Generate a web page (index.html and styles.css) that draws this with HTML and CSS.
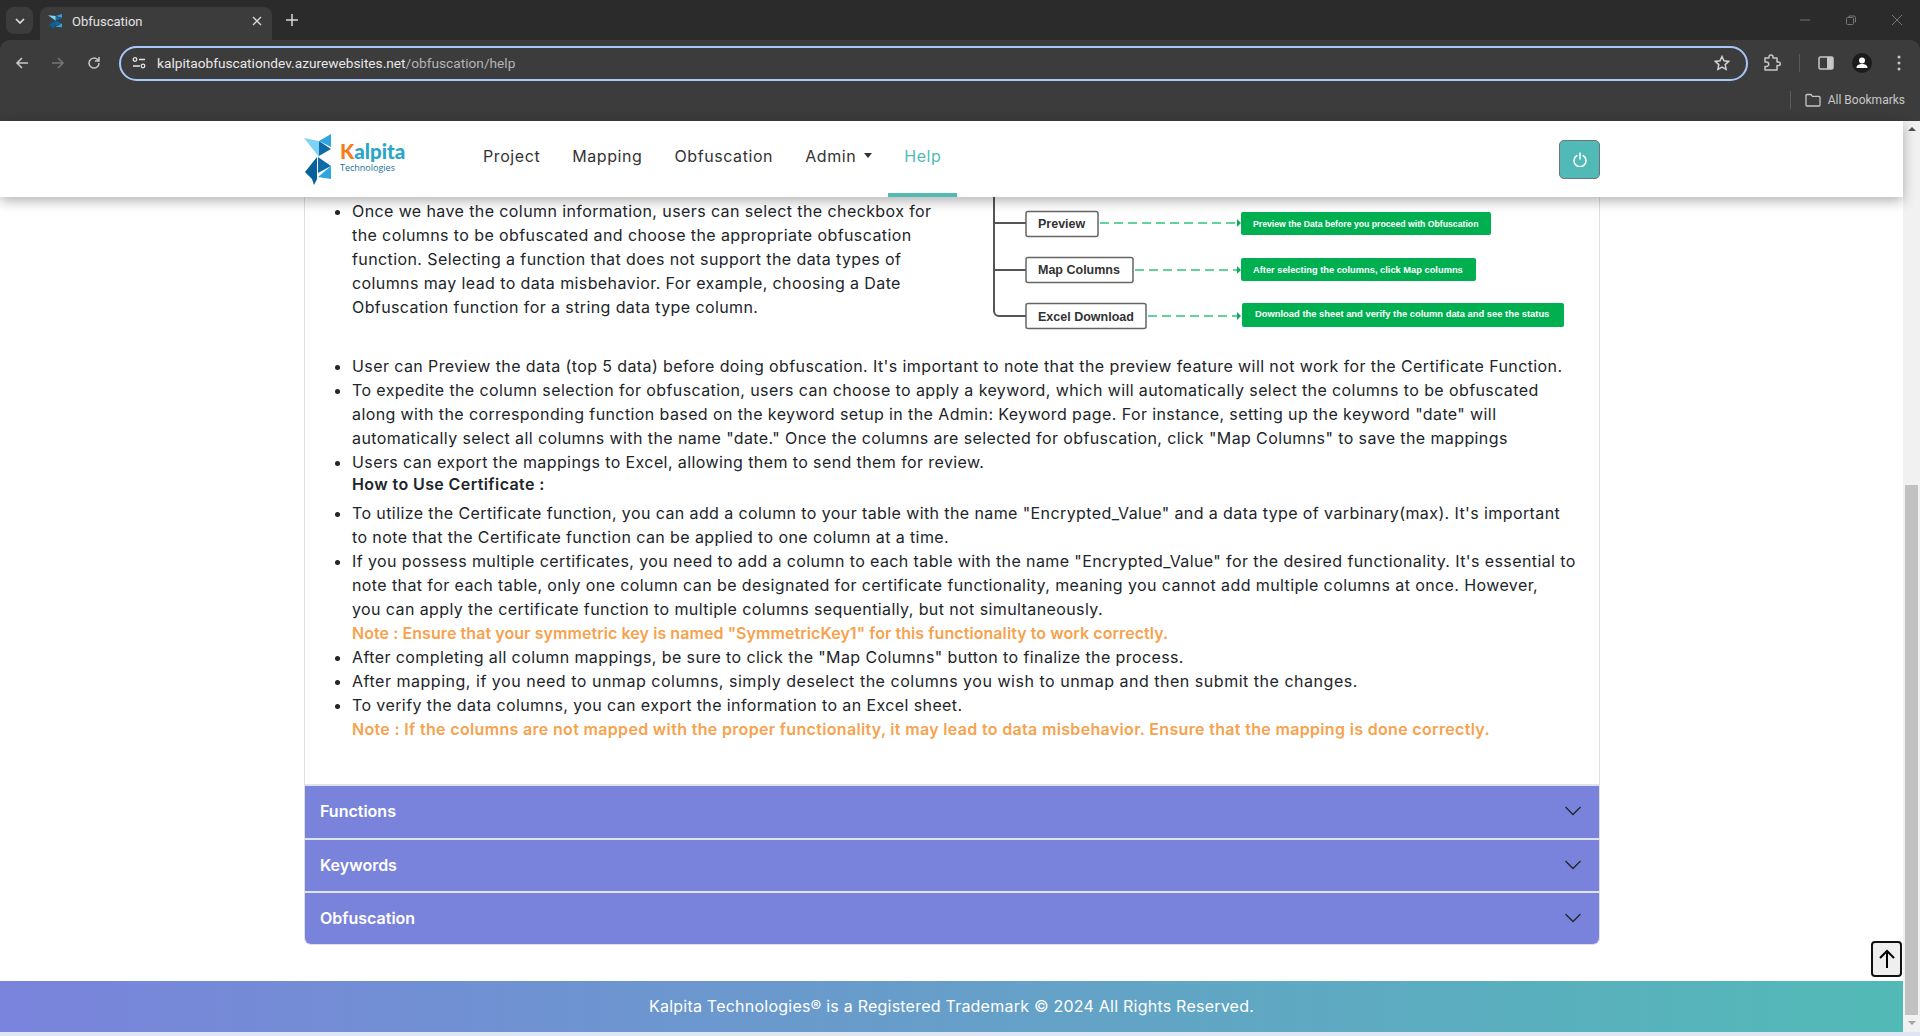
FILE: index.html
```html
<!DOCTYPE html>
<html>
<head>
  <title>Obfuscation</title>
  <link rel="stylesheet" href="styles.css">
</head>
<body>
  <svg class="defs" width="0" height="0">
    <symbol id="kalpita-mark" viewBox="0 0 27 51" preserveAspectRatio="none">
      <polygon fill="#7fd3f2" points="0,4 15,7 15,23"/>
      <polygon fill="#2ea6e0" points="15,7 27,0 27,13"/>
      <polygon fill="#0f6aa5" points="15,7 27,15 15,22"/>
      <polygon fill="#075f9b" points="13,23 1,38 8,45 10,51 13,45"/>
      <polygon fill="#0d6ca8" points="14,23 27,32 14,39"/>
      <polygon fill="#2ea6e0" points="27,32 27,45 14,43"/>
    </symbol>
  </svg>

  <!-- browser frame -->
  <div class="browser">
    <div class="tabstrip">
      <div class="tab-search">
        <svg width="10" height="6" viewBox="0 0 10 6"><path d="M1 1l4 4 4-4" fill="none" stroke="#e3e3e3" stroke-width="1.6"/></svg>
      </div>
      <div class="tab">
        <svg class="favicon" width="14" height="15"><use href="#kalpita-mark" width="14" height="15"/></svg>
        <span class="tab-title">Obfuscation</span>
        <svg class="tab-close" width="10" height="10" viewBox="0 0 10 10"><path d="M1 1l8 8M9 1l-8 8" stroke="#d8d8d8" stroke-width="1.4"/></svg>
      </div>
      <svg class="tab-new" width="12" height="12" viewBox="0 0 12 12"><path d="M6 0v12M0 6h12" stroke="#d8d8d8" stroke-width="1.5"/></svg>
      <div class="window-controls">
        <svg width="10" height="10" viewBox="0 0 10 10"><path d="M0 5h10" stroke="#777" stroke-width="1"/></svg>
        <svg width="10" height="10" viewBox="0 0 10 10"><rect x="0.5" y="2.5" width="7" height="7" rx="1" fill="none" stroke="#777"/><path d="M3 2V1h5a1.500 1.500 0 0 1 1.500 1.500V7H8.500" fill="none" stroke="#777"/></svg>
        <svg width="10" height="10" viewBox="0 0 10 10"><path d="M0 0l10 10M10 0L0 10" stroke="#777" stroke-width="1"/></svg>
      </div>
    </div>
    <div class="toolbar">
      <svg class="nav-icon" width="14" height="14" viewBox="0 0 14 14"><path d="M13 7H2M7 2L2 7l5 5" fill="none" stroke="#c7c7c7" stroke-width="1.600"/></svg>
      <svg class="nav-icon" width="14" height="14" viewBox="0 0 14 14"><path d="M1 7h11M7 2l5 5-5 5" fill="none" stroke="#757575" stroke-width="1.600"/></svg>
      <svg class="nav-icon" width="14" height="14" viewBox="0 0 14 14"><path d="M12 7a5 5 0 1 1-1.500-3.500L12 5M12 1v4H8" fill="none" stroke="#c7c7c7" stroke-width="1.500"/></svg>
      <div class="omnibox">
        <svg class="tune" width="14" height="12" viewBox="0 0 14 12"><circle cx="3" cy="2.500" r="1.800" fill="none" stroke="#e3e3e3" stroke-width="1.300"/><path d="M7 2.500h6M1 9h7" stroke="#e3e3e3" stroke-width="1.500"/><circle cx="11" cy="9" r="1.800" fill="none" stroke="#e3e3e3" stroke-width="1.300"/></svg>
        <span class="url">kalpitaobfuscationdev.azurewebsites.net<span class="url-path">/obfuscation/help</span></span>
        <svg class="star" width="16" height="16" viewBox="0 0 16 16"><path d="M8 1.500l2 4.300 4.700.6-3.500 3.200.9 4.700L8 12l-4.100 2.300.9-4.700L1.300 6.400 6 5.800z" fill="none" stroke="#d0d0d0" stroke-width="1.500"/></svg>
      </div>
      <svg class="tool-icon" width="18" height="18" viewBox="0 0 18 18"><path d="M2 4h4V3a2 2 0 0 1 4 0v1h4v4h1.500a1.800 1.800 0 0 1 0 3.600H14V16H2v-3.500h1.500a2.200 2.200 0 0 0 0-4.500H2z" fill="none" stroke="#c7c7c7" stroke-width="1.500" stroke-linejoin="round"/></svg>
      <span class="tool-sep"></span>
      <svg class="tool-icon" width="16" height="14" viewBox="0 0 16 14"><rect x="1" y="1" width="14" height="12" rx="1.500" fill="none" stroke="#c7c7c7" stroke-width="1.500"/><rect x="9" y="1" width="6" height="12" fill="#c7c7c7"/></svg>
      <svg class="tool-icon avatar" width="20" height="20" viewBox="0 0 20 20"><circle cx="10" cy="10" r="10" fill="#1c1c1c"/><circle cx="10" cy="7.500" r="3" fill="#fff"/><path d="M4.500 15c0-3 2.500-4 5.500-4s5.500 1 5.500 4z" fill="#fff"/></svg>
      <svg class="tool-icon kebab" width="4" height="16" viewBox="0 0 4 16"><circle cx="2" cy="2" r="1.500" fill="#c7c7c7"/><circle cx="2" cy="8" r="1.500" fill="#c7c7c7"/><circle cx="2" cy="14" r="1.500" fill="#c7c7c7"/></svg>
    </div>
    <div class="bookmarks">
      <span class="bookmarks-sep"></span>
      <svg width="16" height="14" viewBox="0 0 16 14"><path d="M1 2.500a1 1 0 0 1 1-1h4l1.500 1.800H14a1 1 0 0 1 1 1V12a1 1 0 0 1-1 1H2a1 1 0 0 1-1-1z" fill="none" stroke="#c7c7c7" stroke-width="1.300"/></svg>
      <span class="bookmarks-label">All Bookmarks</span>
    </div>
  </div>

  <div class="viewport">
    <div class="page">
      <nav class="navbar">
        <a class="brand" href="#">
          <svg width="27" height="51"><use href="#kalpita-mark" width="27" height="51"/></svg>
          <span class="brand-text">
            <span class="brand-name"><span class="brand-k">K</span>alpita</span>
            <span class="brand-sub">Technologies</span>
          </span>
        </a>
        <ul class="nav-links">
          <li><a href="#">Project</a></li>
          <li><a href="#">Mapping</a></li>
          <li><a href="#">Obfuscation</a></li>
          <li><a href="#" class="dropdown">Admin</a></li>
          <li><a href="#" class="active">Help</a></li>
        </ul>
        <button class="logout">
          <svg width="14" height="15" viewBox="0 0 14 15"><path d="M4 3.500a6 6 0 1 0 6 0M7 1v6" fill="none" stroke="#fff" stroke-width="1.500" stroke-linecap="round"/></svg>
        </button>
      </nav>

      <main class="content">
        <div class="card">
          <div class="help-body">
            <div class="help-row">
              <ul class="help-list">
                <li>Once we have the column information, users can select the checkbox for<br>the columns to be obfuscated and choose the appropriate obfuscation<br>function. Selecting a function that does not support the data types of<br>columns may lead to data misbehavior. For example, choosing a Date<br>Obfuscation function for a string data type column.</li>
              </ul>
              <svg class="flow" width="590" height="138" viewBox="985 197 590 138">
                <path d="M994 197V311a5 5 0 0 0 5 5h27M994 223h32M994 270h32" fill="none" stroke="#555" stroke-width="2"/>
                <g fill="#fff" stroke="#666" stroke-width="1.500">
                  <rect x="1026" y="211.500" width="72" height="25" rx="2"/>
                  <rect x="1026" y="257.500" width="107" height="25" rx="2"/>
                  <rect x="1026" y="303.500" width="120" height="25" rx="2"/>
                </g>
                <g class="flow-label">
                  <text x="1038" y="228">Preview</text>
                  <text x="1038" y="274">Map Columns</text>
                  <text x="1038" y="321">Excel Download</text>
                </g>
                <path d="M1100 223h137M1135 270h102M1148 316h89" fill="none" stroke="#2fc27a" stroke-width="1.500" stroke-dasharray="9 5"/>
                <path d="M1237 219l4 4-4 4zM1237 266l4 4-4 4zM1237 312l4 4-4 4z" fill="#16a860"/>
                <g fill="#00b050">
                  <rect x="1241" y="212" width="250" height="23" rx="2"/>
                  <rect x="1241" y="258" width="235" height="23" rx="2"/>
                  <rect x="1242" y="303" width="322" height="24" rx="2"/>
                </g>
                <g class="flow-note">
                  <text x="1253" y="227" font-size="8.700">Preview the Data before you proceed with Obfuscation</text>
                  <text x="1253" y="272.500" font-size="9.300">After selecting the columns, click Map columns</text>
                  <text x="1255" y="317" font-size="9.400">Download the sheet and verify the column data and see the status</text>
                </g>
              </svg>
            </div>
            <ul class="help-list">
              <li>User can Preview the data (top 5 data) before doing obfuscation. It's important to note that the preview feature will not work for the Certificate Function.</li>
              <li>To expedite the column selection for obfuscation, users can choose to apply a keyword, which will automatically select the columns to be obfuscated<br>along with the corresponding function based on the keyword setup in the Admin: Keyword page. For instance, setting up the keyword "date" will<br>automatically select all columns with the name "date." Once the columns are selected for obfuscation, click "Map Columns" to save the mappings</li>
              <li>Users can export the mappings to Excel, allowing them to send them for review.</li>
            </ul>
            <p class="help-heading">How to Use Certificate :</p>
            <ul class="help-list">
              <li>To utilize the Certificate function, you can add a column to your table with the name "Encrypted_Value" and a data type of varbinary(max). It's important<br>to note that the Certificate function can be applied to one column at a time.</li>
              <li>If you possess multiple certificates, you need to add a column to each table with the name "Encrypted_Value" for the desired functionality. It's essential to<br>note that for each table, only one column can be designated for certificate functionality, meaning you cannot add multiple columns at once. However,<br>you can apply the certificate function to multiple columns sequentially, but not simultaneously.<br><span class="note note-short">Note : Ensure that your symmetric key is named "SymmetricKey1" for this functionality to work correctly.</span></li>
              <li>After completing all column mappings, be sure to click the "Map Columns" button to finalize the process.</li>
              <li class="wide-line">After mapping, if you need to unmap columns, simply deselect the columns you wish to unmap and then submit the changes.</li>
              <li>To verify the data columns, you can export the information to an Excel sheet.<br><span class="note">Note : If the columns are not mapped with the proper functionality, it may lead to data misbehavior. Ensure that the mapping is done correctly.</span></li>
            </ul>
          </div>

          <div class="accordion">
            <div class="accordion-item">
              <span>Functions</span>
              <svg width="16" height="10" viewBox="0 0 16 10"><path d="M0.500 1L8 8.500 15.500 1" fill="none" stroke="#212529" stroke-width="1.300"/></svg>
            </div>
            <div class="accordion-item">
              <span>Keywords</span>
              <svg width="16" height="10" viewBox="0 0 16 10"><path d="M0.500 1L8 8.500 15.500 1" fill="none" stroke="#212529" stroke-width="1.300"/></svg>
            </div>
            <div class="accordion-item">
              <span>Obfuscation</span>
              <svg width="16" height="10" viewBox="0 0 16 10"><path d="M0.500 1L8 8.500 15.500 1" fill="none" stroke="#212529" stroke-width="1.300"/></svg>
            </div>
          </div>
        </div>
      </main>

      <footer class="footer">Kalpita Technologies&reg; is a Registered Trademark &copy; 2024 All Rights Reserved.</footer>

      <button class="to-top">
        <svg width="18" height="20" viewBox="0 0 18 20"><path d="M9 19V2M2 9l7-7 7 7" fill="none" stroke="#000" stroke-width="2"/></svg>
      </button>
    </div>

    <div class="scrollbar">
      <span class="scroll-arrow scroll-up"></span>
      <div class="scroll-track"><div class="scroll-thumb"></div></div>
      <span class="scroll-arrow scroll-down"></span>
    </div>
  </div>
  <div class="page-edge"></div>
</body>
</html>
```

FILE: styles.css
```css
* {
  box-sizing: border-box;
}

html, body {
  height: 100%;
}

body {
  margin: 0;
  display: flex;
  flex-direction: column;
  overflow: hidden;
  font-family: 'Inter', sans-serif;
  color: #212529;
  background-color: #fff;
}

.defs {
  position: absolute;
}

/* browser frame */
.browser {
  height: 121px;
  flex: none;
  background-color: #2b2b2b;
  font-family: 'Roboto', sans-serif;
}

.tabstrip {
  height: 40px;
  display: flex;
  align-items: flex-end;
}

.tab-search {
  width: 27px;
  height: 27px;
  margin: 0 7px 6px 6px;
  border-radius: 8px;
  background-color: #3c3c3c;
  display: flex;
  align-items: center;
  justify-content: center;
}

.tab {
  width: 232px;
  height: 33px;
  border-radius: 8px 8px 0 0;
  background-color: #3c3c3c;
  display: flex;
  align-items: center;
  padding: 0 10px 5px 8px;
}

.tab-title {
  margin-left: 10px;
  font-size: 13px;
  color: #e3e3e3;
  flex: 1;
}

.tab-new {
  margin: 0 0 14px 14px;
}

.window-controls {
  margin-left: auto;
  display: flex;
  gap: 36px;
  padding: 0 18px 15px 0;
}

.toolbar {
  height: 46px;
  background-color: #3c3c3c;
  border-radius: 10px 10px 0 0;
  display: flex;
  align-items: center;
  padding: 0 19px 0 15px;
}

.nav-icon {
  margin-right: 22px;
}

.omnibox {
  width: 1629px;
  height: 35px;
  margin-left: -4px;
  border: 2px solid #a8c7fa;
  border-radius: 18px;
  display: flex;
  align-items: center;
  padding: 0 16px 0 11px;
}

.url {
  margin-left: 11px;
  font-size: 13.700px;
  color: #e8e8e8;
}

.url-path {
  color: #b4b4b4;
}

.star {
  margin-left: auto;
}

.tool-icon {
  margin-left: 15px;
}

.tool-sep {
  width: 1px;
  height: 18px;
  margin-left: 18px;
  margin-right: 3px;
  background-color: #5a5a5a;
}

.avatar {
  margin-left: 18px;
}

.kebab {
  margin-left: 25px;
}

.bookmarks {
  height: 35px;
  background-color: #3c3c3c;
  display: flex;
  align-items: center;
  justify-content: flex-end;
  padding: 0 15px 8px 0;
}

.bookmarks-sep {
  width: 1px;
  height: 18px;
  margin-right: 14px;
  background-color: #5a5a5a;
}

.bookmarks-label {
  margin-left: 7px;
  font-size: 12px;
  color: #c7c7c7;
}

/* page */
.viewport {
  flex: 1;
  min-height: 0;
  display: flex;
}

.page {
  position: relative;
  flex: 1;
  min-width: 0;
  display: flex;
  flex-direction: column;
}

.navbar {
  position: relative;
  z-index: 2;
  height: 76px;
  flex: none;
  padding: 0 303px 0 304px;
  display: flex;
  align-items: center;
  background-color: #fff;
  box-shadow: 0 4px 12px rgba(0, 0, 0, 0.3);
}

.brand {
  display: flex;
  align-items: center;
  gap: 9px;
  text-decoration: none;
  width: 163px;
}

.brand-text {
  display: flex;
  flex-direction: column;
  margin-top: -4px;
}

.brand-name {
  font-family: 'Lato', sans-serif;
  font-weight: 900;
  font-size: 20.500px;
  line-height: 20px;
  color: #2aa5c9;
}

.brand-k {
  color: #f47b20;
}

.brand-sub {
  font-family: 'Open Sans', sans-serif;
  font-size: 9px;
  line-height: 13px;
  color: #1a6fa0;
}

.nav-links {
  list-style-type: none;
  margin: 0;
  padding: 0;
  display: flex;
  height: 100%;
}

.nav-links a {
  height: 100%;
  display: flex;
  align-items: center;
  padding: 0 16px 7px;
  font-size: 16px;
  letter-spacing: 0.58px;
  color: #333;
  text-decoration: none;
}

.nav-links .active {
  color: #52bab6;
  border-bottom: 4px solid #52bab6;
  padding-bottom: 3px;
}

.dropdown::after {
  content: "";
  margin-left: 8px;
  border-top: 5px solid #333;
  border-left: 4.500px solid transparent;
  border-right: 4.500px solid transparent;
}

.logout {
  margin-left: auto;
  width: 41px;
  height: 39px;
  padding: 0;
  background-color: #52bab6;
  border: 1px solid #6c757d;
  border-radius: 5px;
  display: flex;
  align-items: center;
  justify-content: center;
}

.content {
  flex: 1;
  min-height: 0;
  padding: 0 303px 0 304px;
  display: flex;
  flex-direction: column;
}

.card {
  border: 1px solid #dfe0e4;
  border-top: 0;
  border-radius: 0 0 7px 7px;
  overflow: hidden;
}

.help-body {
  padding-top: 2px;
  height: 587px;
  font-size: 16px;
  letter-spacing: 0.4px;
  line-height: 24px;
}

.help-row {
  display: flex;
  height: 155px;
}

.help-list {
  margin: 0;
  padding-left: 47px;
  white-space: nowrap;
}

.wide-line {
  letter-spacing: 0.52px;
}

.flow {
  flex: none;
  position: absolute;
  left: 985px;
  top: 76px;
}

.flow-label {
  font-family: 'Liberation Sans', sans-serif;
  font-size: 12.500px;
  font-weight: 700;
  letter-spacing: 0;
  fill: #333;
}

.flow-note {
  font-family: 'Liberation Sans', sans-serif;
  font-weight: 700;
  letter-spacing: 0;
  fill: #fff;
}

.help-heading {
  margin: 0 0 6px;
  padding-left: 47px;
  font-weight: 600;
  line-height: 21px;
}

.note {
  font-weight: 600;
  letter-spacing: 0.33px;
  color: #f6a24e;
}

.note-short {
  letter-spacing: 0.07px;
}

.accordion {
  border-top: 2px solid #e2e3e6;
}

.accordion-item {
  height: 53px;
  padding: 0 18px 2px 15px;
  display: flex;
  align-items: center;
  justify-content: space-between;
  background-color: #7a83dc;
  border-bottom: 2px solid #e2e3e6;
  color: #fff;
  font-size: 16px;
  font-weight: 600;
}

.accordion-item:first-child {
  height: 54px;
}

.accordion-item:last-child {
  height: 51px;
  border-bottom: 0;
}

.footer {
  height: 51px;
  flex: none;
  display: flex;
  align-items: center;
  justify-content: center;
  padding-bottom: 1px;
  background: linear-gradient(90deg, #7a83dc, #52bab6);
  color: #fff;
  font-size: 16px;
  letter-spacing: 0.23px;
}

.to-top {
  position: absolute;
  right: 1px;
  bottom: 55px;
  width: 31px;
  height: 36px;
  padding: 0;
  background-color: #efefef;
  border: 2px solid #111;
  border-radius: 4px;
  display: flex;
  align-items: center;
  justify-content: center;
}

.scrollbar {
  width: 17px;
  flex: none;
  background-color: #f1f1f1;
  display: flex;
  flex-direction: column;
  align-items: center;
}

.scroll-arrow {
  height: 17px;
  flex: none;
  width: 0;
  border-left: 4px solid transparent;
  border-right: 4px solid transparent;
}

.scroll-up {
  margin-top: 6px;
  height: 4px;
  margin-bottom: 7px;
  border-bottom: 4px solid #505050;
}

.scroll-down {
  margin-top: 6px;
  height: 4px;
  margin-bottom: 7px;
  border-top: 4px solid #a3a3a3;
}

.scroll-track {
  flex: 1;
  width: 100%;
  padding: 347px 2px 0 2px;
  display: flex;
}

.scroll-thumb {
  flex: 1;
  background-color: #c1c1c1;
}

.page-edge {
  height: 4px;
  flex: none;
  background-color: #dfe6f3;
}
```
